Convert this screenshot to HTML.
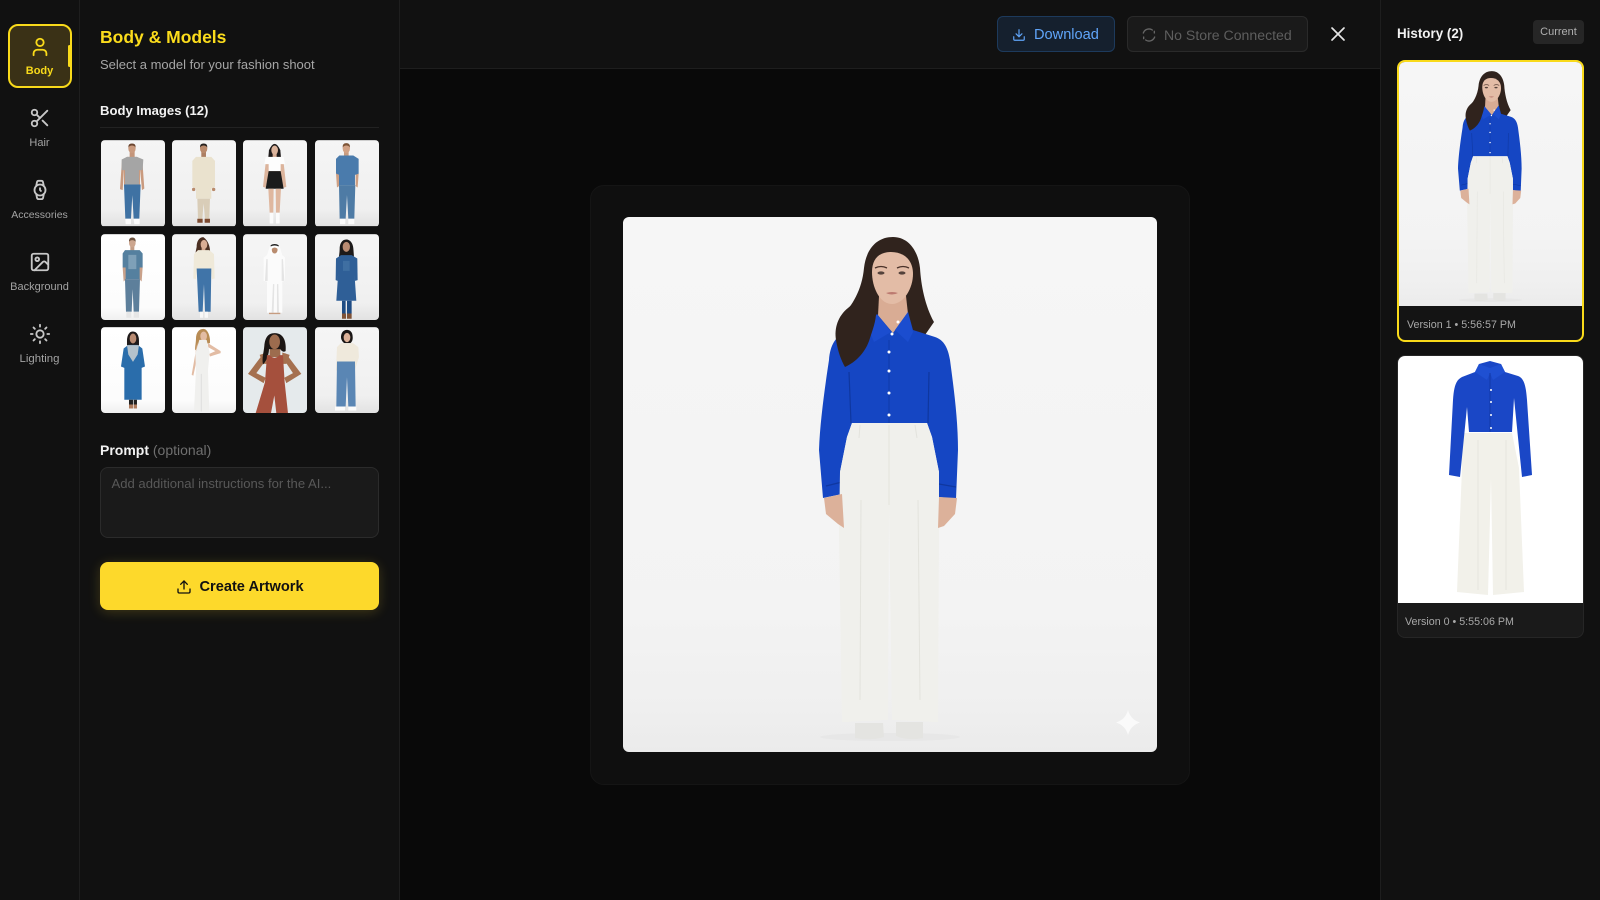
<!DOCTYPE html>
<html lang="en"><head><meta charset="utf-8"><title>Body &amp; Models</title>
<style>
*{box-sizing:border-box;margin:0;padding:0}
html,body{width:1600px;height:900px;overflow:hidden;background:#090909;font-family:"Liberation Sans",sans-serif}
.a{position:absolute}
.t{position:absolute;white-space:nowrap;line-height:1}
.ic{position:absolute;fill:none;stroke-width:2;stroke-linecap:round;stroke-linejoin:round}
.lab{position:absolute;left:0;width:79px;text-align:center;font-size:11.4px;color:#a3a3a3;line-height:1}
.th{position:absolute;width:64.3px;height:86.3px;border-radius:4px;overflow:hidden}
.th svg{display:block;width:100%;height:100%}
</style></head><body>
<svg width="0" height="0" style="position:absolute">
<defs>
<linearGradient id="mbg" x1="0" y1="0" x2="0" y2="1"><stop offset="0" stop-color="#f6f6f6"/><stop offset=".75" stop-color="#f3f3f3"/><stop offset=".92" stop-color="#efefef"/><stop offset="1" stop-color="#ebebeb"/></linearGradient>
<linearGradient id="tbg" x1="0" y1="0" x2="0" y2="1"><stop offset="0" stop-color="#f5f5f5"/><stop offset=".8" stop-color="#f0f0f0"/><stop offset="1" stop-color="#e2e2e2"/></linearGradient>
<linearGradient id="tbw" x1="0" y1="0" x2="0" y2="1"><stop offset="0" stop-color="#fff"/><stop offset=".85" stop-color="#fcfcfc"/><stop offset="1" stop-color="#f0f0f0"/></linearGradient>
<g id="fig">
<rect x="623" y="217" width="534" height="535" fill="url(#mbg)"/>
<ellipse cx="890" cy="737" rx="70" ry="4" fill="#dcdcdc" opacity=".3"/>
<path d="M893 237C876 237 866 250 864 268C862 290 852 306 842 316L860 345L925 335L934 322C925 306 921 285 920 268C918 250 908 237 893 237Z" fill="#30231d"/>
<path d="M879 296H906L908 314L893 338L878 316Z" fill="#d9ac94"/>
<path d="M872 272C872 258 880 252 891 252C904 252 913 260 913 274C913 288 904 304 892 304C880 304 872 288 872 272Z" fill="#e3bca6"/>
<path d="M875 268q6-3 12 0M897 268q6-3 12 0" stroke="#4a3229" stroke-width="1.300" fill="none"/>
<ellipse cx="881" cy="273" rx="3.500" ry="1.600" fill="#54423b"/><ellipse cx="902" cy="273" rx="3.500" ry="1.600" fill="#54423b"/>
<path d="M886 293q6-2 12 0q-6 3-12 0Z" fill="#bc7a70"/>
<path d="M823 498L819 450C820 420 826 380 829 360C830 345 836 335 848 331L868 326L877 314L893 333L908 312L913 330L935 337C944 340 948 348 950 360C954 390 958 420 958 450L956 499L939 497L939 472L932 437L927 423H852L847 437L840 472L842 494Z" fill="#1546c3"/>
<path d="M849 372L851 423M929 372L928 423M826 486L842 482M939 484L956 487" stroke="#0f379f" stroke-width="1.200" fill="none"/>
<path d="M868 328L877 314L891 332L874 342ZM913 332L908 312L895 330L908 342Z" fill="#1b4dcf"/>
<path d="M889 340V423" stroke="#1039a8" stroke-width="1"/>
<path d="M866 272C862 290 858 300 848 308C838 316 834 328 836 340C838 352 841 360 845 367C856 362 866 352 870 338C874 326 877 318 876 306C870 295 868 285 866 272Z" fill="#30231d"/>
<g fill="#fff"><circle cx="898" cy="322" r="1.500"/><circle cx="892" cy="334" r="1.500"/><circle cx="889" cy="352" r="1.500"/><circle cx="889" cy="371" r="1.500"/><circle cx="889" cy="393" r="1.500"/><circle cx="889" cy="415" r="1.500"/></g>
<path d="M852 423L927 423L932 437L939 472L939 530L938 722L892 720L889 505L888 720L842 722L839 530L840 472L847 437Z" fill="#f0f0ec"/>
<path d="M860 425L859 438M915 425L917 438M889 425V505M861 500L860 700M918 500L920 700" stroke="#e3e3dd" stroke-width="1" fill="none"/>
<path d="M855 723H883L884 737Q870 741 855 738ZM896 722H923L923 738Q908 741 896 736Z" fill="#e4e4e1"/>
<path d="M824 498L842 494L844 528L838 524L826 514ZM939 497L957 498L955 514L944 526L938 528Z" fill="#dcb19a"/>
</g>
</defs></svg>

<!-- left rail -->
<div class="a" style="left:0;top:0;width:80px;height:900px;background:#111;border-right:1px solid #1e1e1e"></div>
<div class="a" style="left:80px;top:0;width:320px;height:900px;background:#111;border-right:1px solid #1e1e1e"></div>
<div class="a" style="left:8px;top:24px;width:64px;height:64px;background:#3a3116;border:2px solid #f9da1a;border-radius:10px"></div>
<div class="a" style="left:68px;top:45px;width:3px;height:22px;background:#f9da1a;border-radius:2px"></div>
<svg class="ic" style="left:28.500px;top:35.500px;stroke:#f9da1a" width="22" height="22" viewBox="0 0 24 24"><path d="M19 21v-2a4 4 0 0 0-4-4H9a4 4 0 0 0-4 4v2"/><circle cx="12" cy="7" r="4"/></svg>
<div class="lab" style="top:65.500px;color:#f9da1a;font-weight:700;font-size:11px">Body</div>
<svg class="ic" style="left:28.500px;top:107px;stroke:#c8c8c8" width="22" height="22" viewBox="0 0 24 24"><circle cx="6" cy="6" r="3"/><path d="M8.120 8.120 12 12"/><path d="M20 4 8.120 15.880"/><circle cx="6" cy="18" r="3"/><path d="M14.800 14.800 20 20"/></svg>
<div class="lab" style="top:137.500px;font-size:11px">Hair</div>
<svg class="ic" style="left:28.500px;top:179px;stroke:#c8c8c8" width="22" height="22" viewBox="0 0 24 24"><circle cx="12" cy="12" r="6"/><polyline points="12 10 12 12 13 13"/><path d="m16.130 7.660-.81-4.050a2 2 0 0 0-2-1.610h-2.680a2 2 0 0 0-2 1.610l-.78 4.050"/><path d="m7.880 16.360.8 4a2 2 0 0 0 2 1.610h2.720a2 2 0 0 0 2-1.610l.81-4.050"/></svg>
<div class="lab" style="top:209.500px;font-size:10.500px">Accessories</div>
<svg class="ic" style="left:28.500px;top:251px;stroke:#c8c8c8" width="22" height="22" viewBox="0 0 24 24"><rect x="3" y="3" width="18" height="18" rx="2"/><circle cx="9" cy="9" r="2"/><path d="m21 15-3.086-3.086a2 2 0 0 0-2.828 0L6 21"/></svg>
<div class="lab" style="top:281.500px;font-size:11px">Background</div>
<svg class="ic" style="left:28.500px;top:323px;stroke:#c8c8c8" width="22" height="22" viewBox="0 0 24 24"><circle cx="12" cy="12" r="4"/><path d="M12 2v2M12 20v2m-7.070-17.070 1.410 1.410m11.320 11.320 1.410 1.410M2 12h2m16 0h2M6.340 17.660l-1.410 1.410M19.070 4.930l-1.410 1.410"/></svg>
<div class="lab" style="top:353.500px">Lighting</div>

<!-- panel -->
<div class="t" style="left:100px;top:29px;font-size:17.500px;font-weight:700;color:#fbdc1c">Body &amp; Models</div>
<div class="t" style="left:100px;top:58px;font-size:13px;color:#a6a6a6">Select a model for your fashion shoot</div>
<div class="t" style="left:100px;top:103.500px;font-size:13.100px;font-weight:700;color:#f2f2f2">Body Images (12)</div>
<div class="a" style="left:100px;top:127px;width:279px;height:1px;background:#222"></div>

<div class="th" style="left:100.500px;top:140.300px"><svg viewBox="0 0 193 258"><rect width="193" height="258" fill="url(#tbg)"/><rect x="86" y="30" width="15" height="22" fill="#c4957a"/><ellipse cx="93" cy="25" rx="11" ry="14" fill="#c99a7e"/><path d="M82 22q-1-12 11-12q12 0 11 12q-4-6-11-6q-7 0-11 6Z" fill="#6a452f"/><path d="M63 60L78 50H108L124 60L130 145L123 150L117 85V133H69V85L65 150L57 147Z" fill="#c99a7e"/><path d="M62 58L78 50H108L127 58L125 90H114V133H72V90H62Z" fill="#a5a5a5"/><path d="M69 133H119L115 236H98L94 165L90 236H73Z" fill="#3f72a3"/><path d="M73 236H90V252H74ZM98 236H116V252H100Z" fill="#fdfdfd"/></svg></div>
<div class="th" style="left:172px;top:140.300px"><svg viewBox="0 0 193 258"><rect width="193" height="258" fill="url(#tbg)"/><rect x="88" y="30" width="14" height="22" fill="#ad7f63"/><ellipse cx="95" cy="25" rx="11" ry="14" fill="#b98a6c"/><path d="M84 22q-1-12 11-12q12 0 11 12q-4-6-11-6q-7 0-11 6Z" fill="#26211e"/><path d="M72 50H118L129 62L129 140L118 146V176H72V146L61 140L61 62Z" fill="#eae2ce"/><path d="M76 176H114L112 236H99L95 190L91 236H78Z" fill="#d9cdb8"/><path d="M76 236H92V248H76ZM98 236H114V248H98Z" fill="#7d4a30"/><circle cx="65" cy="148" r="5" fill="#b98a6c"/><circle cx="125" cy="148" r="5" fill="#b98a6c"/></svg></div>
<div class="th" style="left:243px;top:140.300px"><svg viewBox="0 0 193 258"><rect width="193" height="258" fill="url(#tbg)"/><path d="M78 30q17-38 34 0l2 22H76Z" fill="#1e1a1a"/><rect x="89" y="36" width="12" height="16" fill="#d4a88f"/><ellipse cx="95" cy="30" rx="10" ry="14" fill="#dcb49c"/><path d="M68 68L60 140L68 143L78 100H112L122 143L130 140L122 68Z" fill="#dcb49c"/><path d="M68 50H122L126 72H113V93H77V72H64Z" fill="#fdfdfd"/><path d="M77 93H113L122 146H68Z" fill="#1b1b1b"/><path d="M76 146H92L91 218H80ZM98 146H114L110 218H99Z" fill="#dfb79f"/><path d="M80 218H91V250H80ZM99 218H110V250H99Z" fill="#fbfbfb"/></svg></div>
<div class="th" style="left:314.500px;top:140.300px"><svg viewBox="0 0 193 258"><rect width="193" height="258" fill="url(#tbg)"/><rect x="87" y="30" width="14" height="18" fill="#c89c80"/><ellipse cx="94" cy="25" rx="11" ry="14" fill="#d2a285"/><path d="M83 22q-1-13 11-13q12 0 11 13q-4-6-11-6q-7 0-11 6Z" fill="#7d5436"/><path d="M73 46H115L131 56V102L120 104L120 135H72V104L63 102V56Z" fill="#4a7bac"/><path d="M63 100L72 104V138L66 142ZM131 100L122 104V138L128 142Z" fill="#cd9f83"/><path d="M72 135H121L118 236H100L96 165L92 236H74Z" fill="#4e7ba5"/><path d="M75 236H91V252H75ZM100 236H118V252H100Z" fill="#fbfbfb"/></svg></div>

<div class="th" style="left:100.500px;top:233.700px"><svg viewBox="0 0 193 258"><rect width="193" height="258" fill="url(#tbw)"/><rect x="88" y="32" width="12" height="18" fill="#c39d86"/><ellipse cx="94" cy="26" rx="10" ry="14" fill="#cca68f"/><path d="M84 23q-1-13 10-13q11 0 10 13q-4-5-10-5q-6 0-10 5Z" fill="#6d5340"/><path d="M72 48H116L125 58V100L119 102V135H72V102L65 100V58Z" fill="#55809f"/><path d="M82 62H106V105H82Z" fill="#7ea0b8"/><path d="M65 100H74V136L68 142ZM125 100H116V136L122 142Z" fill="#c9a18a"/><path d="M72 135H117L114 233H98L95 165L92 233H75Z" fill="#5d7f9b"/><path d="M76 233H91V251H76ZM98 233H114V251H98Z" fill="#e6e6e6"/></svg></div>
<div class="th" style="left:172px;top:233.700px"><svg viewBox="0 0 193 258"><rect width="193" height="258" fill="url(#tbg)"/><path d="M94 9C80 9 74 24 74 38C72 50 68 62 70 74L88 58H108L113 66C117 50 113 22 94 9Z" fill="#4b2f22"/><rect x="89" y="36" width="11" height="16" fill="#d0a48b"/><ellipse cx="96" cy="31" rx="10" ry="14" fill="#d9ad94"/><path d="M78 48H112L126 60L128 133L120 135L116 103H76L72 135L64 133L66 60Z" fill="#efe9d9"/><path d="M74 103H118L116 233H99L96 150L92 233H80Z" fill="#4074a8"/><path d="M84 233H93V251H84ZM98 233H108V251H98Z" fill="#f8f8f8"/></svg></div>
<div class="th" style="left:243px;top:233.700px"><svg viewBox="0 0 193 258"><rect width="193" height="258" fill="url(#tbg)"/><path d="M72 63L82 31Q95 25 108 31L118 63L126 70L126 140L118 143L118 236H72L72 143L62 140L62 70Z" fill="#fbfbfb"/><path d="M70 75H74L74 140H66ZM116 75H120L124 140H116ZM90 150H94L92 236H86ZM102 150H106L108 236H102Z" fill="#e4e4e4"/><ellipse cx="95" cy="46" rx="9" ry="12" fill="#b98c6f"/><path d="M84 36Q95 28 106 36L108 58L103 60L104 44Q95 36 86 44L87 60L82 58Z" fill="#fff"/><path d="M83 33Q95 26 107 33V37Q95 31 83 37Z" fill="#222"/><path d="M78 236H112V240H78Z" fill="#c69c80"/></svg></div>
<div class="th" style="left:314.500px;top:233.700px"><svg viewBox="0 0 193 258"><rect width="193" height="258" fill="url(#tbg)"/><path d="M94 16C80 16 74 30 74 45C74 58 70 72 72 82H116C118 70 116 56 115 42C114 28 106 16 94 16Z" fill="#1d1a1a"/><ellipse cx="94" cy="38" rx="11" ry="15" fill="#b98b72"/><path d="M78 63H110L127 73L128 138L120 140L118 112L124 200H64L70 112L68 140L62 138L63 73Z" fill="#2f5f97"/><path d="M84 80H104V110H84Z" fill="#3f6fa2"/><path d="M81 200H92V238H81ZM96 200H110V238H96Z" fill="#1f4c84"/><path d="M81 238H93V254H81ZM96 238H110V254H96Z" fill="#7f5236"/></svg></div>

<div class="th" style="left:100.500px;top:327px"><svg viewBox="0 0 193 258"><rect width="193" height="258" fill="url(#tbw)"/><path d="M96 13C84 13 78 26 78 40V58H114V40C114 26 108 13 96 13Z" fill="#1f1a1a"/><ellipse cx="96" cy="34" rx="10" ry="15" fill="#b98b72"/><path d="M82 53H110L124 64L132 118L122 122L122 218H70L70 122L60 118L68 64Z" fill="#2a6dab"/><path d="M78 54H114L110 82L96 104L82 82Z" fill="#b4c2cc"/><path d="M84 218H96V232H84ZM98 218H108V232H98Z" fill="#222"/><path d="M84 232H96V244H84ZM98 232H108V244H98Z" fill="#ad7a5c"/></svg></div>
<div class="th" style="left:172px;top:327px"><svg viewBox="0 0 193 258"><rect width="193" height="258" fill="url(#tbw)"/><path d="M94 5C80 5 72 18 72 34C72 48 68 60 70 70L84 50H100L114 48C116 30 108 5 94 5Z" fill="#b88c55"/><ellipse cx="95" cy="27" rx="10" ry="14" fill="#e2bca4"/><path d="M76 46L59 143L64 146L78 80ZM108 48L146 72L146 78L114 88L112 80L130 72L108 60Z" fill="#e2bca4"/><path d="M82 38L104 38L113 76L108 130L112 253H66L72 130L70 80Z" fill="#f0f0ee"/><path d="M88 140V253" stroke="#dedede" stroke-width="3"/></svg></div>
<div class="th" style="left:243px;top:327px"><svg viewBox="0 0 193 258"><rect width="193" height="258" fill="#e5eaec"/><path d="M80 60H112V90H80Z" fill="#9d6c4e"/><path d="M62 78L15 140L62 168L68 152L40 138L62 108ZM128 78L175 140L130 168L124 152L150 138L130 108Z" fill="#a5704f"/><path d="M50 83L72 76V110H60ZM140 83L118 76V110H130Z" fill="#a5704f"/><path d="M95 18C72 18 66 36 64 56C62 78 56 92 60 112C72 100 78 80 78 66H112C115 72 122 76 128 72C130 50 126 18 95 18Z" fill="#1c1614"/><ellipse cx="95" cy="44" rx="16" ry="22" fill="#9d6c4e"/><path d="M72 84H80Q94 100 110 84H120L125 165L135 258H100L94 205L84 258H38L66 165Z" fill="#a5503d"/></svg></div>
<div class="th" style="left:314.500px;top:327px"><svg viewBox="0 0 193 258"><rect width="193" height="258" fill="url(#tbg)"/><path d="M96 8C84 8 78 18 78 30C78 38 84 46 88 48H106C112 44 114 36 113 28C113 16 106 8 96 8Z" fill="#1b1716"/><ellipse cx="96" cy="31" rx="10" ry="14" fill="#dcb198"/><path d="M78 48H114L130 60L132 90L120 128L114 122L118 90L116 104H72L68 130L63 130L66 60Z" fill="#efe9dc"/><path d="M66 103H120L122 238H100L96 150L92 238H64Z" fill="#5a86b4"/><path d="M60 238H90V250H60ZM100 238H124V250H100Z" fill="#fbfbfb"/></svg></div>

<div class="t" style="left:100px;top:442.500px;font-size:14px;font-weight:700;color:#f2f2f2">Prompt <span style="font-weight:400;color:#6f6f6f">(optional)</span></div>
<div class="a" style="left:100px;top:467px;width:279px;height:71px;background:#1a1a1a;border:1px solid #2b2b2b;border-radius:8px"></div>
<div class="t" style="left:111.500px;top:477px;font-size:13.100px;color:#585858">Add additional instructions for the AI...</div>
<div class="a" style="left:100px;top:562px;width:279px;height:48px;background:#fdd92b;border-radius:8px;box-shadow:0 2px 12px rgba(253,217,43,.2)"></div>
<svg class="ic" style="left:176px;top:579px;stroke:#111" width="16" height="16" viewBox="0 0 24 24"><path d="M21 15v4a2 2 0 0 1-2 2H5a2 2 0 0 1-2-2v-4"/><polyline points="17 8 12 3 7 8"/><line x1="12" y1="3" x2="12" y2="15"/></svg>
<div class="t" style="left:199.500px;top:579.500px;font-size:14.600px;font-weight:700;color:#111">Create Artwork</div>

<!-- header -->
<div class="a" style="left:400px;top:0;width:980px;height:69px;background:#111;border-bottom:1px solid #1e1e1e"></div>
<div class="a" style="left:997px;top:16px;width:118px;height:36px;background:#15202e;border:1px solid #1d3a5c;border-radius:6px"></div>
<svg class="ic" style="left:1012px;top:28px;stroke:#60a5fa" width="14" height="14" viewBox="0 0 24 24"><path d="M21 15v4a2 2 0 0 1-2 2H5a2 2 0 0 1-2-2v-4"/><polyline points="7 10 12 15 17 10"/><line x1="12" y1="15" x2="12" y2="3"/></svg>
<div class="t" style="left:1034px;top:28px;font-size:14.600px;color:#60a5fa">Download</div>
<div class="a" style="left:1127px;top:16px;width:181px;height:36px;background:#1a1a1a;border:1px solid #2a2a2a;border-radius:6px"></div>
<svg class="ic" style="left:1141px;top:27px;stroke:#666" width="16" height="16" viewBox="0 0 24 24"><path d="M3.500 9A9 9 0 0 1 17 4.500"/><path d="M20.500 15A9 9 0 0 1 7 19.500"/><path d="M20 6.500V9"/><path d="M4 15v2.500"/></svg>
<div class="t" style="left:1164px;top:27.500px;font-size:14.100px;color:#5e5e5e">No Store Connected</div>
<svg class="ic" style="left:1326px;top:22px;stroke:#e6e6e6;stroke-width:1.700" width="24" height="24" viewBox="0 0 24 24"><path d="M18 6 6 18"/><path d="m6 6 12 12"/></svg>

<!-- stage -->
<div class="a" style="left:590px;top:185px;width:600px;height:600px;background:#0f0f0f;border:1px solid #151515;border-radius:14px"></div>
<svg class="a" style="left:623px;top:217px;border-radius:6px" width="534" height="535" viewBox="623 217 534 535"><use href="#fig"/><path d="M1128 710Q1130.500 719.500 1140 722.500Q1130.500 725.500 1128 735Q1125.500 725.500 1116 722.500Q1125.500 719.500 1128 710Z" fill="#fafafa"/></svg>

<!-- history -->
<div class="a" style="left:1380px;top:0;width:220px;height:900px;background:#111;border-left:1px solid #1e1e1e"></div>
<div class="t" style="left:1397px;top:26.500px;font-size:13.400px;font-weight:700;color:#f2f2f2">History (2)</div>
<div class="a" style="left:1533px;top:20px;width:51px;height:24px;background:#262626;border-radius:4px"></div>
<div class="t" style="left:1533px;top:27px;width:51px;text-align:center;font-size:11px;color:#b0b0b0">Current</div>

<div class="a" style="left:1397px;top:60px;width:187px;height:282px;background:#141414;border:2px solid #f9da1a;border-radius:8px;overflow:hidden"><svg style="display:block" width="183" height="244" viewBox="690 217 400 533" preserveAspectRatio="xMidYMid slice"><use href="#fig"/></svg></div>
<div class="t" style="left:1407px;top:319.500px;font-size:10.700px;color:#a8a8a8">Version 1 • 5:56:57 PM</div>

<div class="a" style="left:1397px;top:355px;width:187px;height:283px;background:#1a1a1a;border:1px solid #262626;border-radius:8px;overflow:hidden"><svg class="a" style="left:-1px;top:-1px" width="187" height="248" viewBox="1397 355 187 248"><rect x="1397" y="355" width="187" height="248" fill="#fff"/>
<path d="M1462 433L1512 433L1519 468L1524 592L1493 595L1491 478L1488 595L1457 592L1462 468Z" fill="#f2f1ea"/><path d="M1478 440V590M1506 440V590" stroke="#e6e5dd" stroke-width="1"/>
<path d="M1479 364L1490 361L1501 364L1505 372L1518 376C1524 378 1526 386 1527 400L1532 475L1522 477L1514 398L1512 432H1469L1467 407L1460 477L1449 475L1453 400C1454 386 1456 380 1462 377L1475 372Z" fill="#1a47c6"/>
<path d="M1479 364L1490 368L1501 364L1505 372L1493 380L1490 373L1487 380L1475 372Z" fill="#1f50d2"/><path d="M1490 373V432" stroke="#123aa8"/>
<g fill="#fff"><circle cx="1491" cy="390" r="1"/><circle cx="1491" cy="402" r="1"/><circle cx="1491" cy="415" r="1"/><circle cx="1491" cy="428" r="1"/></g></svg></div>
<div class="t" style="left:1405px;top:616.500px;font-size:10.700px;color:#a8a8a8">Version 0 • 5:55:06 PM</div>
</body></html>
